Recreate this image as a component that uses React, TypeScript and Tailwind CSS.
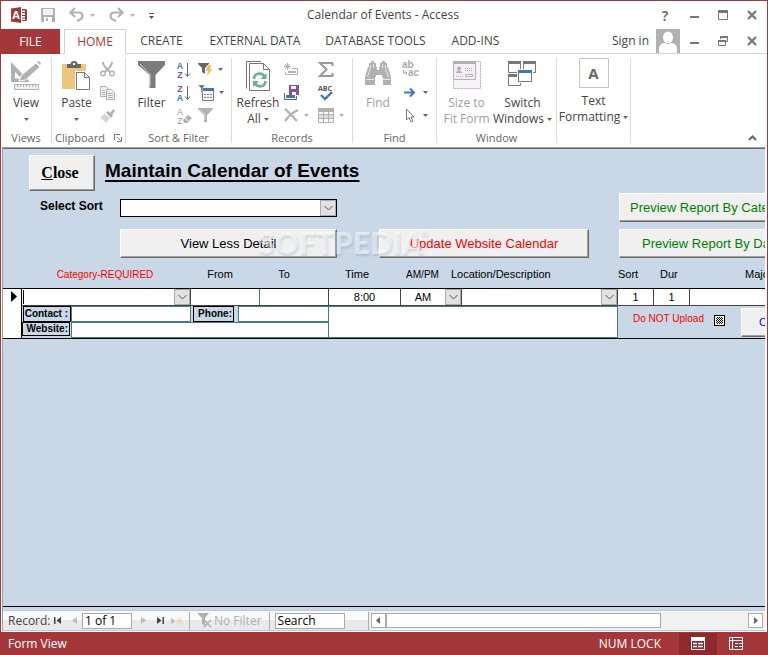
import type { ReactNode } from 'react';
import clsx from 'clsx';

const GRAY = '#777777';
const LIGHT = '#b1b1b1';
const BLUE = '#3f78b5';
const PURPLE = '#8552a1';

interface IconProps {
  w: number;
  h: number;
  className?: string;
  children: ReactNode;
}

function Icon({ w, h, className, children }: IconProps) {
  return (
    <svg
      width={w}
      height={h}
      viewBox={`0 0 ${w} ${h}`}
      fill="none"
      aria-hidden="true"
      className={clsx('shrink-0 overflow-visible', className)}
    >
      {children}
    </svg>
  );
}

function Caret({ muted = false }: { muted?: boolean }) {
  return (
    <Icon w={5} h={3}>
      <path d="M0 0h5L2.5 3z" fill={muted ? LIGHT : '#666'} />
    </Icon>
  );
}

function AccessLogo() {
  return (
    <Icon w={16} h={16}>
      <path d="M0 1.5 10 0v16L0 14.5z" fill="#a4373a" />
      <path
        d="M11 2h3.500q1.500 0 1.500 1.500v9q0 1.500-1.500 1.500H11v-1h3v-1.500h-3v-1h3V9h-3V8h3V6h-3V5h3V3.500h-3z"
        fill="#a4373a"
      />
      <text x="5" y="12" textAnchor="middle" fontSize="11" fontWeight="700" fontFamily="Open Sans" fill="#fff">
        A
      </text>
    </Icon>
  );
}

function SaveIcon() {
  return (
    <Icon w={14} h={14}>
      <path d="M0 0h14v14H1l-1-1z" fill={LIGHT} />
      <path d="M2 1h10v6H2z" fill="#f4eef6" />
      <path d="M3 9h8v5H3z" fill="#fff" />
      <path d="M5 10h2v3H5z" fill={LIGHT} />
    </Icon>
  );
}

function UndoIcon({ flip = false }: { flip?: boolean }) {
  return (
    <Icon w={15} h={14} className={flip ? '-scale-x-100' : ''}>
      <path d="M2 4.500h7.500c5 0 5.500 6 .5 7.500L8 13" stroke={LIGHT} strokeWidth="2.200" />
      <path d="M6 0 1.500 4.500 6 9" stroke={LIGHT} strokeWidth="2.200" />
    </Icon>
  );
}

function ViewIcon() {
  return (
    <Icon w={31} h={30}>
      <path d="M0 1v20h19L0 1zm4 10 6.500 6.500H4z" fill={LIGHT} fillRule="evenodd" />
      <path d="m8 20 2.500-6L25 2l4 4-14.500 13z" fill={LIGHT} stroke="#fff" />
      <path d="m26 1 1.500-1L30 2.500 29 4z" fill={LIGHT} />
      <path d="M3.500 23.500h24v5h-24z" fill="#f4eef6" stroke={LIGHT} />
      <path d="M6.500 24v2m3-2v2m3-2v2m3-2v2m3-2v2m3-2v2m3-2v2" stroke={LIGHT} />
    </Icon>
  );
}

function PasteIcon() {
  return (
    <Icon w={29} h={30}>
      <path d="M0 3h24v25H0z" fill="#ebc67c" />
      <path d="M5 3h3.500c0-1.500 1-3 3.500-3s3.500 1.500 3.500 3H19v4H5z" fill="#666" />
      <path d="M11 2h2v2h-2z" fill="#fff" />
      <path d="M13 10h16v20H13z" fill="#fff" />
      <path d="M14.500 11.500h8l5 5v12h-13z" fill="#fff" stroke={GRAY} />
      <path d="M22.500 11.500v5h5" stroke={GRAY} />
    </Icon>
  );
}

function CutIcon() {
  return (
    <Icon w={15} h={15}>
      <path d="M3 0c0 4 3 6 7 10M12 0c0 4-3 6-7 10" stroke={LIGHT} strokeWidth="2" />
      <circle cx="3" cy="11.500" r="2.300" stroke={LIGHT} strokeWidth="1.400" />
      <circle cx="12" cy="11.500" r="2.300" stroke={LIGHT} strokeWidth="1.400" />
    </Icon>
  );
}

function CopyIcon() {
  return (
    <Icon w={15} h={14}>
      <path d="M.5.5H6l3 3v7H.5z" fill="#f4eef6" stroke={LIGHT} />
      <path d="M2 4.500h3m-3 2h3m-3 2h3" stroke={LIGHT} />
      <path d="M6.500 3.500H11l3.500 3v7h-8z" fill="#f4eef6" stroke={LIGHT} />
      <path d="M8 7.500h5m-5 2h5m-5 2h5" stroke={LIGHT} />
    </Icon>
  );
}

function PainterIcon() {
  return (
    <Icon w={15} h={14}>
      <path d="m0 8 5-3.500L10 9l-4 5z" fill="#d9d4dc" />
      <path d="m6 3.500 2-1.500L13 6.500 11 9z" fill={LIGHT} />
      <path d="m10 4 3.500-4L15 1.500 12 6z" fill={LIGHT} />
    </Icon>
  );
}

function LauncherIcon() {
  return (
    <Icon w={8} h={8}>
      <path d="M.5 6V.5H6M3 3l3.500 3.500M7.500 3v4.500H3" stroke={GRAY} />
    </Icon>
  );
}

function FunnelIcon() {
  return (
    <Icon w={28} h={28}>
      <path d="M0 0h27v4l-9.500 10v13h-6V14L0 4z" fill="#7b7b7b" />
      <path d="m2 3 10 10.500V25" stroke="#d8d8d8" />
    </Icon>
  );
}

function SortIcon({ top, bottom, topColor, bottomColor }: Record<'top' | 'bottom' | 'topColor' | 'bottomColor', string>) {
  return (
    <Icon w={15} h={18}>
      <g fontFamily="Liberation Sans" fontSize="9" fontWeight="700" textAnchor="middle">
        <text x="3" y="8" fill={topColor}>
          {top}
        </text>
        <text x="3" y="17" fill={bottomColor}>
          {bottom}
        </text>
      </g>
      <path d="M10.500 2v13M8 12.500l2.500 3 2.500-3" stroke="#666" />
    </Icon>
  );
}

function ClearSortIcon() {
  return (
    <Icon w={15} h={18}>
      <g fontFamily="Liberation Sans" fontSize="9" textAnchor="middle" fill="#999">
        <text x="3" y="8">
          A
        </text>
        <text x="3" y="17">
          Z
        </text>
      </g>
      <path d="m6 13 5-5 4 3-5 5H7z" fill={LIGHT} />
      <path d="m8 11 3 3" stroke="#fff" />
    </Icon>
  );
}

function SelectionIcon() {
  return (
    <Icon w={15} h={16}>
      <path d="M0 1h11v1L7 6v6L4 10V6L0 2z" fill="#666" />
      <path d="M10 3h4l-2 4h3l-7 8 2-6H7z" fill="#ebb85c" stroke="#fff" strokeWidth=".6" />
    </Icon>
  );
}

function AdvancedIcon() {
  return (
    <Icon w={16} h={16}>
      <path d="M4.500 5.500h11v10h-11z" fill="#fff" stroke={GRAY} />
      <path d="M4 3h12v3H4z" fill={BLUE} />
      <path d="M0 0h7L4.500 3v5L3 7V3z" fill="#666" stroke="#fff" strokeWidth=".4" />
      <path d="M6 9.500h2m1 0h2m1 0h2M6 12.500h2m1 0h2m1 0h2" stroke={GRAY} />
    </Icon>
  );
}

function ToggleFilterIcon() {
  return (
    <Icon w={16} h={15}>
      <path d="M0 0h15v1L9 7v7H6V7L0 1z" fill={LIGHT} />
      <path d="m2 1.500 5 5V12" stroke="#ddd" />
    </Icon>
  );
}

function RefreshIcon() {
  return (
    <Icon w={25} h={31}>
      <path d="M.5 27.500V.5H15" stroke={GRAY} />
      <path d="M3.500 2.500h14l6 6v21h-20z" fill="#fff" stroke={GRAY} />
      <path d="M17.500 2.500v6h6" stroke={GRAY} />
      <path d="M8 18c0-6 8-7 10.500-2.500M19.500 20c0 6-8 7-10.500 2.500" stroke="#6fae94" strokeWidth="2.600" />
      <path d="M20.500 12v6h-6zM7 26v-6h6z" fill="#6fae94" />
    </Icon>
  );
}

function NewRecordIcon() {
  return (
    <Icon w={14} h={13}>
      <path d="M3.500 0v7M0 3.500h7M1 1l5 5m0-5L1 6" stroke={LIGHT} />
      <path d="M8 5.500h5.500v6H1.500v-3" stroke={LIGHT} />
      <path d="M4 8h8v2H4z" fill={LIGHT} />
    </Icon>
  );
}

function SaveRecordIcon() {
  return (
    <Icon w={15} h={15}>
      <path d="M.5 8v6.500h12V11" stroke="#666" />
      <path d="M2 10h9v3H2z" fill={BLUE} />
      <path d="M5 0h10v10H5z" fill={PURPLE} />
      <path d="M7 1h5v3H7zM8 7h4v3H8z" fill="#fff" />
    </Icon>
  );
}

function DeleteIcon() {
  return (
    <Icon w={15} h={13}>
      <path d="M1 0c3 2 7 7 12 12M14 1C9 3 4 8 1 12" stroke={LIGHT} strokeWidth="2.200" />
    </Icon>
  );
}

function SigmaIcon() {
  return (
    <Icon w={16} h={15}>
      <path d="M14.500 4V1H2l6.500 6.500L2 14h12.500v-3" stroke="#999" strokeWidth="2" />
    </Icon>
  );
}

function SpellingIcon() {
  return (
    <Icon w={16} h={17}>
      <text x="7" y="7" textAnchor="middle" fontFamily="Open Sans" fontWeight="700" fontSize="7" fill="#555">
        ABC
      </text>
      <path d="m3 11 4 4 7-7" stroke={BLUE} strokeWidth="2.400" />
    </Icon>
  );
}

function MoreIcon() {
  return (
    <Icon w={16} h={15}>
      <path d="M.5.5h15v14H.5z" fill="#fff" stroke={LIGHT} />
      <path d="M0 0h16v4H0z" fill={LIGHT} />
      <path d="M1 7h14v3H1z" fill="#ddd" />
      <path d="M5.500 4v10m5-10v10M1 6.500h14M1 10.500h14" stroke={LIGHT} />
    </Icon>
  );
}

function BinocularsIcon() {
  return (
    <Icon w={26} h={24}>
      <path
        d="M6 0h3v2h2v4h1v3h2V6h1V2h2V0h3v2h2v4h1l3 10v8h-8v-8h-1v-2h-6v2h-1v8H0v-8L3 6h1V2h2z"
        fill={LIGHT}
      />
      <path d="M5.500 4v3l-3 9m18-12v3l3 9M8.500 3v4M17.500 3v4M1 18.500h8m8 0h8" stroke="#e8e8e8" />
    </Icon>
  );
}

function ReplaceIcon() {
  return (
    <Icon w={17} h={17}>
      <g fontFamily="Liberation Sans" fontSize="10" fontWeight="700" fill="#a9a9a9">
        <text x="0" y="7">
          ab
        </text>
        <text x="6" y="15">
          ac
        </text>
      </g>
      <path d="M1.500 9v3H5M3.500 10.500 5 12l-1.500 1.500" stroke="#a3a3a3" />
    </Icon>
  );
}

function GoToIcon() {
  return (
    <Icon w={13} h={9}>
      <path d="M0 4.500h10M6 .5l4 4-4 4" stroke={BLUE} strokeWidth="2" />
    </Icon>
  );
}

function PointerIcon() {
  return (
    <Icon w={10} h={15}>
      <path d="M1.500 1v11l2.500-2.500 2 4.500 2-1-2-4h3z" fill="#fff" stroke="#777" />
    </Icon>
  );
}

function SizeToFitIcon() {
  return (
    <Icon w={28} h={28}>
      <path d="M.5.5h27v27H.5z" fill="#f7f3f9" stroke={LIGHT} strokeDasharray="2 1" />
      <path d="M.5.5h22v18H.5z" fill="#f4eef6" stroke={LIGHT} />
      <path d="M0 0h23v3H0z" fill={LIGHT} />
      <circle cx="6" cy="7.500" r="2" fill={LIGHT} />
      <path d="M3 12c0-3 6-3 6 0z" fill={LIGHT} />
      <path d="M12 7.500h8M3 15.500h7M12 9.500h8" stroke={LIGHT} strokeDasharray="1 1" />
      <path d="M12.500 13.500h7v2h-7z" fill="#fff" stroke={LIGHT} />
    </Icon>
  );
}

function SwitchWindowsIcon() {
  return (
    <Icon w={29} h={26}>
      <path d="M.5.5h12v11H.5zM15.500.5h12v11h-12zM.5 13.500h12v11H.5z" fill="#fff" stroke={GRAY} />
      <path d="M0 0h13v3H0zM15 0h13v3H15zM0 13h13v3H0z" fill={GRAY} />
      <path d="M9 8h16v14H9z" fill="#fff" />
      <path d="M10.500 9.500h13v11h-13z" fill="#fff" stroke={GRAY} />
      <path d="M10 9h14v3H10z" fill={BLUE} />
    </Icon>
  );
}

function MinimizeIcon() {
  return (
    <Icon w={10} h={10}>
      <path d="M1 6h9v2H1z" fill={GRAY} />
    </Icon>
  );
}

function CloseIcon() {
  return (
    <Icon w={10} h={10}>
      <path d="m1 1 8 8m0-8L1 9" stroke={GRAY} strokeWidth="2.200" />
    </Icon>
  );
}

function MaximizeIcon() {
  return (
    <Icon w={10} h={10}>
      <path d="M.5.5h9v9h-9z" stroke={GRAY} />
      <path d="M0 0h10v3H0z" fill={GRAY} />
    </Icon>
  );
}

function RestoreIcon() {
  return (
    <Icon w={10} h={10}>
      <path d="M2.500 3V.5h7v5H8M.5 4.500h7v5h-7z" stroke={GRAY} />
      <path d="M2 0h8v2H2zM0 4h8v2H0z" fill={GRAY} />
    </Icon>
  );
}

function Avatar() {
  return (
    <Icon w={24} h={24}>
      <path d="M0 0h24v24H0z" fill={LIGHT} />
      <ellipse cx="12" cy="8.500" rx="5" ry="6" fill="#fff" />
      <path d="M3 24v-4c0-4 3-6 6-6 2 1.500 4 1.500 6 0 3 0 6 2 6 6v4z" fill="#fff" />
    </Icon>
  );
}

function IconButton({ label, className, children }: { label: string; className?: string; children: ReactNode }) {
  return (
    <button type="button" aria-label={label} className={clsx('flex shrink-0 items-center justify-center', className)}>
      {children}
    </button>
  );
}

function TitleBar() {
  return (
    <header className="flex h-7 items-center pl-[10px]">
      <AccessLogo />
      <IconButton label="Save" className="ml-[14px]">
        <SaveIcon />
      </IconButton>
      <IconButton label="Undo" className="ml-[14px] gap-[6px]">
        <UndoIcon />
        <Caret muted />
      </IconButton>
      <IconButton label="Redo" className="ml-[14px] gap-[6px]">
        <UndoIcon flip />
        <Caret muted />
      </IconButton>
      <IconButton label="Customize toolbar" className="ml-[14px] pt-[2px]">
        <Icon w={5} h={6}>
          <path d="M0 0h5v1H0zM0 3h5L2.500 6z" fill="#555" />
        </Icon>
      </IconButton>
      <h1 className="flex-1 pr-12 text-center text-[12px] text-[#444]">Calendar of Events - Access</h1>
      <div className="flex items-center gap-[19px] pr-[10px]">
        <IconButton label="Help" className="w-[10px] text-[14px] font-bold text-[#777]">
          ?
        </IconButton>
        <IconButton label="Minimize">
          <MinimizeIcon />
        </IconButton>
        <IconButton label="Maximize">
          <MaximizeIcon />
        </IconButton>
        <IconButton label="Close">
          <CloseIcon />
        </IconButton>
      </div>
    </header>
  );
}

const TABS = [
  { label: 'CREATE', className: 'w-[71px]' },
  { label: 'EXTERNAL DATA', className: 'w-[116px]' },
  { label: 'DATABASE TOOLS', className: 'w-[125px]' },
  { label: 'ADD-INS', className: 'w-[75px]' },
];

function TabStrip() {
  return (
    <nav className="flex h-[25px] text-[12px] text-[#444]">
      <button type="button" className="w-[59px] bg-[#a4373a] text-white">
        FILE
      </button>
      <div className="w-1 border-b border-[#d4d4d4]" />
      <button type="button" className="w-[62px] border border-b-0 border-[#d4d4d4] text-[#a4373a]">
        HOME
      </button>
      <div className="flex flex-1 border-b border-[#d4d4d4]">
        {TABS.map((tab) => (
          <button key={tab.label} type="button" className={clsx('whitespace-nowrap', tab.className)}>
            {tab.label}
          </button>
        ))}
        <div className="ml-auto flex items-center pr-[10px]">
          <a href="#signin" className="mr-[7px] whitespace-nowrap">
            Sign in
          </a>
          <Avatar />
          <div className="ml-[9px] flex gap-[19px]">
            <IconButton label="Minimize form">
              <MinimizeIcon />
            </IconButton>
            <IconButton label="Restore form">
              <RestoreIcon />
            </IconButton>
            <IconButton label="Close form">
              <CloseIcon />
            </IconButton>
          </div>
        </div>
      </div>
    </nav>
  );
}

function Group({ title, className, children, launcher }: { title?: string; className: string; children: ReactNode; launcher?: boolean }) {
  return (
    <section className={clsx('flex shrink-0 flex-col border-r border-[#dcdcdc]', className)}>
      <div className="flex h-[75px] justify-center">{children}</div>
      <div className="flex h-[10px] items-center justify-center gap-[9px] text-[11px] text-[#666]">
        {title}
        {launcher && (
          <IconButton label={`${title} options`}>
            <LauncherIcon />
          </IconButton>
        )}
      </div>
    </section>
  );
}

interface LargeButtonProps {
  icon: ReactNode;
  label: string;
  label2?: string;
  caret?: boolean;
  disabled?: boolean;
  className?: string;
}

function LargeButton({ icon, label, label2, caret, disabled, className }: LargeButtonProps) {
  return (
    <button
      type="button"
      disabled={disabled}
      className={clsx(
        'flex flex-col items-center whitespace-nowrap text-[12px] leading-4',
        disabled ? 'text-[#a0a0a0]' : 'text-[#444]',
        className
      )}
    >
      <span className="flex h-[37px] items-start justify-center pt-[3px]">{icon}</span>
      <span>{label}</span>
      <span className="flex h-4 items-center gap-[3px]">
        {label2}
        {caret && <Caret />}
      </span>
    </button>
  );
}

function SmallButton({ label, caret, muted, children }: { label: string; caret?: boolean; muted?: boolean; children: ReactNode }) {
  return (
    <IconButton label={label} className="h-[23px] gap-[5px]">
      {children}
      {caret && <Caret muted={muted} />}
    </IconButton>
  );
}

function Ribbon() {
  return (
    <div className="flex h-[93px] pt-1 pb-1">
      <Group title="Views" className="w-[51px]">
        <LargeButton icon={<ViewIcon />} label="View" caret />
      </Group>
      <Group title="Clipboard" className="w-[74px]" launcher>
        <LargeButton icon={<PasteIcon />} label="Paste" caret className="w-[40px] pr-[3px]" />
        <div className="mr-1 ml-[2px] flex flex-col">
          <SmallButton label="Cut">
            <CutIcon />
          </SmallButton>
          <SmallButton label="Copy">
            <CopyIcon />
          </SmallButton>
          <SmallButton label="Format Painter">
            <PainterIcon />
          </SmallButton>
        </div>
      </Group>
      <Group title="Sort & Filter" className="w-[106px]">
        <LargeButton icon={<FunnelIcon />} label="Filter" className="w-[40px]" />
        <div className="ml-[5px] flex flex-col">
          <SmallButton label="Ascending">
            <SortIcon top="A" bottom="Z" topColor={BLUE} bottomColor={PURPLE} />
          </SmallButton>
          <SmallButton label="Descending">
            <SortIcon top="Z" bottom="A" topColor={PURPLE} bottomColor={BLUE} />
          </SmallButton>
          <SmallButton label="Remove Sort">
            <ClearSortIcon />
          </SmallButton>
        </div>
        <div className="mr-[2px] ml-[6px] flex flex-col items-start">
          <SmallButton label="Selection" caret>
            <SelectionIcon />
          </SmallButton>
          <SmallButton label="Advanced" caret>
            <AdvancedIcon />
          </SmallButton>
          <SmallButton label="Toggle Filter">
            <ToggleFilterIcon />
          </SmallButton>
        </div>
      </Group>
      <Group title="Records" className="w-[121px]">
        <LargeButton icon={<RefreshIcon />} label="Refresh" label2="All" caret className="w-[44px]" />
        <div className="ml-1 flex w-[34px] flex-col items-start">
          <SmallButton label="New">
            <NewRecordIcon />
          </SmallButton>
          <SmallButton label="Save Record">
            <SaveRecordIcon />
          </SmallButton>
          <SmallButton label="Delete" caret muted>
            <DeleteIcon />
          </SmallButton>
        </div>
        <div className="mr-1 flex flex-col items-start">
          <SmallButton label="Totals">
            <SigmaIcon />
          </SmallButton>
          <SmallButton label="Spelling">
            <SpellingIcon />
          </SmallButton>
          <SmallButton label="More" caret muted>
            <MoreIcon />
          </SmallButton>
        </div>
      </Group>
      <Group title="Find" className="w-[84px]">
        <LargeButton icon={<BinocularsIcon />} label="Find" disabled className="w-[40px]" />
        <div className="mr-[3px] ml-1 flex flex-col items-start">
          <SmallButton label="Replace">
            <ReplaceIcon />
          </SmallButton>
          <SmallButton label="Go To" caret>
            <span className="flex w-4 justify-center">
              <GoToIcon />
            </span>
          </SmallButton>
          <SmallButton label="Select" caret>
            <span className="flex w-4 justify-center">
              <PointerIcon />
            </span>
          </SmallButton>
        </div>
      </Group>
      <Group title="Window" className="w-[120px]">
        <LargeButton icon={<SizeToFitIcon />} label="Size to" label2="Fit Form" disabled className="w-[52px]" />
        <LargeButton icon={<SwitchWindowsIcon />} label="Switch" label2="Windows" caret className="w-[60px]" />
      </Group>
      <Group className="w-[74px]">
        <button type="button" className="flex flex-col items-center text-[12px] leading-4 whitespace-nowrap text-[#444]">
          <span className="mb-[5px] flex h-[30px] w-[30px] items-center justify-center border border-[#c6c6c6] text-[15px] font-bold text-[#666]">
            A
          </span>
          <span>Text</span>
          <span className="flex items-center gap-[3px]">
            Formatting <Caret />
          </span>
        </button>
      </Group>
      <IconButton label="Collapse the Ribbon" className="mt-auto mr-[10px] mb-[2px] ml-auto">
        <Icon w={9} h={6}>
          <path d="m1 5 3.500-3.500L8 5" stroke="#666" strokeWidth="2" />
        </Icon>
      </IconButton>
    </div>
  );
}

function FormButton({ className, children }: { className?: string; children: ReactNode }) {
  return (
    <button
      type="button"
      className={clsx(
        'shrink-0 overflow-hidden border border-t-white border-r-[#696969] border-b-[#696969] border-l-white bg-[#f0f0f0] whitespace-nowrap shadow-[inset_-1px_-1px_0_#a0a0a0]',
        className
      )}
    >
      {children}
    </button>
  );
}

interface DropDownProps {
  id: string;
  label: string;
  value?: string;
  cursor?: boolean;
  className?: string;
}

function DropDown({ id, label, value, cursor, className }: DropDownProps) {
  return (
    <div className={clsx('relative flex shrink-0 bg-white', className)}>
      <select
        id={id}
        aria-label={label}
        defaultValue={value}
        className="min-w-0 flex-1 appearance-none bg-transparent pr-4 text-center text-[11px] leading-4 outline-none"
      >
        <option>{value}</option>
      </select>
      {cursor && <span className="pointer-events-none absolute inset-y-px left-px w-px bg-black" />}
      <span className="pointer-events-none absolute inset-y-0 right-0 flex w-4 items-center justify-center border border-[#ababab] bg-[#e1e1e1]">
        <Icon w={9} h={6}>
          <path d="m.5 1 4 4 4-4" stroke="#555" />
        </Icon>
      </span>
    </div>
  );
}

function FormHeader() {
  return (
    <div className="flex shrink-0 flex-col overflow-hidden pt-[6px]">
      <div className="flex h-[37px] pl-[26px]">
        <FormButton className="h-[36px] w-[66px] pr-1 font-['Liberation_Serif',serif] text-[16px] font-bold">
          <span className="underline">C</span>lose
        </FormButton>
        <h2 className="ml-[10px] text-[19px] leading-8 font-bold whitespace-nowrap underline decoration-2 underline-offset-[3px]">
          Maintain Calendar of Events
        </h2>
      </div>
      <div className="mt-px flex h-[29px]">
        <label htmlFor="sort" className="w-[117px] shrink-0 pl-[37px] text-[12px] leading-[26px] font-bold">
          Select Sort
        </label>
        <DropDown id="sort" label="Select Sort" className="mt-[6px] h-[18px] w-[217px] border border-black" />
        <FormButton className="ml-[282px] h-[29px] w-[168px] px-[10px] text-left text-[13px] text-[#008000]">
          Preview Report By Category
        </FormButton>
      </div>
      <div className="mt-[7px] flex h-[29px] pl-[117px]">
        <FormButton className="w-[217px] text-[13px]">View Less Detail</FormButton>
        <FormButton className="ml-[42px] w-[210px] text-[13px] text-[#ff0000]">Update Website Calendar</FormButton>
        <FormButton className="ml-[30px] w-[168px] pl-[22px] text-left text-[13px] text-[#008000]">
          Preview Report By Date
        </FormButton>
      </div>
      <div className="flex h-[30px] pl-[19px] text-center text-[11px] leading-[33px] whitespace-nowrap">
        <span className="w-[166px] shrink-0 text-[10px] text-[#ff0000]">Category-REQUIRED</span>
        <span className="w-[64px] shrink-0">From</span>
        <span className="w-[64px] shrink-0">To</span>
        <span className="w-[82px] shrink-0">Time</span>
        <span className="w-[49px] shrink-0 text-[10px]">AM/PM</span>
        <span className="w-[171px] shrink-0 pl-1 text-left">Location/Description</span>
        <span className="w-[42px] shrink-0 text-left">Sort</span>
        <span className="w-[85px] shrink-0 text-left">Dur</span>
        <span className="shrink-0">Major</span>
      </div>
    </div>
  );
}

const FIELD = 'min-w-0 bg-white px-px text-[11px] leading-[14px] outline-none';
const TAG = 'flex shrink-0 items-center justify-end border border-black text-[10px] leading-3 font-bold whitespace-nowrap';

function EventRecord() {
  return (
    <div className="flex shrink-0 overflow-hidden border-y border-black">
      <div className="flex w-[18px] shrink-0 justify-center bg-white pt-[2px] pl-1">
        <Icon w={6} h={11}>
          <path d="M0 0v11l6-5.500z" fill="#000" />
        </Icon>
      </div>
      <div className="flex min-w-0 flex-1 flex-col border-l border-black">
        <div className="flex h-[17px] border-b border-[#444]">
          <DropDown id="category" label="Category" cursor className="w-[169px] border-r border-[#444]" />
          <input aria-label="From" className={clsx(FIELD, 'w-[69px] border-r border-[#408080]')} />
          <input aria-label="To" className={clsx(FIELD, 'w-[69px] border-r border-[#444]')} />
          <input aria-label="Time" defaultValue="8:00" className={clsx(FIELD, 'w-[72px] border-r border-[#444] text-center')} />
          <DropDown id="ampm" label="AM/PM" value="AM" className="w-[61px] border-r border-[#444]" />
          <DropDown id="location" label="Location" className="w-[156px] border-r border-[#444]" />
          <input aria-label="Sort" defaultValue="1" className={clsx(FIELD, 'w-[36px] border-r border-[#444] text-center')} />
          <input aria-label="Duration" defaultValue="1" className={clsx(FIELD, 'w-[36px] border-r border-[#444] text-center')} />
          <input aria-label="Major" className={clsx(FIELD, 'w-0 flex-1')} />
        </div>
        <div className="flex h-[32px]">
          <div className="flex w-[307px] shrink-0 flex-col border-r border-[#408080]">
            <div className="flex h-4">
              <label htmlFor="contact" className={clsx(TAG, 'ml-px w-[48px] pr-[2px]')}>
                Contact :
              </label>
              <input id="contact" className={clsx(FIELD, 'w-[120px] border border-[#408080]')} />
              <label htmlFor="phone" className={clsx(TAG, 'ml-[2px] w-[41px] pr-px')}>
                Phone:
              </label>
              <input id="phone" className={clsx(FIELD, 'ml-1 flex-1 border border-r-0 border-[#408080]')} />
            </div>
            <div className="flex h-4">
              <label htmlFor="website" className={clsx(TAG, 'h-[14px] w-[48px] pr-px')}>
                Website:
              </label>
              <input id="website" className={clsx(FIELD, 'ml-px flex-1 border border-r-0 border-[#408080]')} />
            </div>
          </div>
          <textarea
            aria-label="Description"
            className="w-[289px] shrink-0 resize-none border-y border-r border-[#408080] bg-white outline-none"
          />
          <div className="flex shrink-0 items-start pt-[6px] pl-[15px] text-[10px] leading-[14px] text-[#ff0000]">
            <label htmlFor="noupload" className="w-[81px] whitespace-nowrap">
              Do NOT Upload
            </label>
            <input
              id="noupload"
              type="checkbox"
              className="mt-[3px] h-[11px] w-[11px] appearance-none border border-black bg-[repeating-conic-gradient(#000_0_25%,#fff_0_50%)] bg-[length:2px_2px] shadow-[inset_0_0_0_1px_white]"
            />
          </div>
          <FormButton className="mt-[2px] ml-[16px] h-[29px] w-[80px] pl-[17px] text-left text-[11px] text-[#0000ff]">Copy</FormButton>
        </div>
      </div>
    </div>
  );
}

function Watermark() {
  return (
    <div
      aria-hidden="true"
      className="pointer-events-none absolute top-[75px] left-[255px] flex items-start font-['Lato',sans-serif] text-[30px] leading-[36px] font-black text-white/50 [text-shadow:1px_2px_2px_rgb(90_110_140_/_0.2)]"
    >
      SOFTPEDIA
      <span className="-ml-[3px] text-[10px] leading-[16px]">®</span>
    </div>
  );
}

function NavSeparator({ className }: { className?: string }) {
  return <div className={clsx('h-[18px] w-px shrink-0 bg-[#ababab]', className)} />;
}

function NavBar() {
  return (
    <div className="flex h-[21px] shrink-0 items-center border-t border-b border-[#c8c8c8] bg-linear-to-b from-[#f8f9fa] from-50% to-[#e7e9ec] to-50% pl-[5px] text-[12px] text-[#444]">
      <label htmlFor="record" className="w-[46px] shrink-0">
        Record:
      </label>
      <IconButton label="First record">
        <Icon w={7} h={7}>
          <path d="M0 0h1.500v7H0zM7 0v7L2.500 3.500z" fill="#444" />
        </Icon>
      </IconButton>
      <IconButton label="Previous record" className="ml-[11px]">
        <Icon w={5} h={7}>
          <path d="M5 0v7L0 3.500z" fill="#bbb" />
        </Icon>
      </IconButton>
      <input
        id="record"
        defaultValue="1 of 1"
        className="ml-[5px] h-4 w-[50px] border border-[#ababab] bg-white px-[2px] leading-4 text-black outline-none"
      />
      <IconButton label="Next record" className="ml-[9px]">
        <Icon w={5} h={7}>
          <path d="M0 0v7l5-3.500z" fill="#bbb" />
        </Icon>
      </IconButton>
      <IconButton label="Last record" className="ml-[11px]">
        <Icon w={7} h={7}>
          <path d="M5.500 0H7v7H5.500zM0 0v7l4.500-3.500z" fill="#444" />
        </Icon>
      </IconButton>
      <IconButton label="New record" className="ml-[7px]">
        <Icon w={13} h={8}>
          <path d="M0 .5v7L4.500 4z" fill="#c4c4c4" />
          <path d="M8.500 0v8M5 4h7M6 1.500l5 5m0-5-5 5" stroke="#eed9a0" />
        </Icon>
      </IconButton>
      <NavSeparator className="ml-[5px]" />
      <button type="button" disabled className="ml-[7px] flex shrink-0 items-center gap-[2px] text-[#b1b1b1]">
        <Icon w={15} h={15}>
          <path d="M0 0h12L8 5v8L5 11V5z" fill={LIGHT} />
          <path d="m7 7 7 7m0-7-7 7" stroke={LIGHT} strokeWidth="1.500" />
        </Icon>
        No Filter
      </button>
      <NavSeparator className="ml-[7px]" />
      <input
        aria-label="Search records"
        defaultValue="Search"
        className="ml-[5px] h-4 w-[70px] shrink-0 border border-[#ababab] bg-white px-[2px] leading-4 text-black outline-none"
      />
      <div className="ml-[23px] flex h-[18px] flex-1 items-center border-l border-[#ababab] bg-[#f1f1f1] pr-[2px] pl-[2px]">
        <IconButton label="Scroll left" className="h-[15px] w-[15px] border border-[#ababab] bg-white">
          <Icon w={4} h={7}>
            <path d="M4 0v7L0 3.500z" fill="#666" />
          </Icon>
        </IconButton>
        <div className="flex flex-1">
          <div className="h-[15px] w-[76%] border border-[#ababab] bg-white" />
        </div>
        <IconButton label="Scroll right" className="h-[15px] w-[15px] border border-[#ababab] bg-white">
          <Icon w={4} h={7}>
            <path d="M0 0v7l4-3.500z" fill="#666" />
          </Icon>
        </IconButton>
      </div>
    </div>
  );
}

function StatusBar() {
  return (
    <footer className="flex h-[23px] shrink-0 items-center bg-[#a4373a] pl-[8px] text-[12px] text-white">
      <span>Form View</span>
      <span className="ml-auto">NUM LOCK</span>
      <IconButton label="Form View" className="ml-[18px] h-[22px] w-[38px] bg-[#8e2a2e]">
        <Icon w={14} h={13}>
          <path d="M.5.500h13v12H.5z" stroke="#fff" />
          <path d="M0 0h14v4H0z" fill="#fff" />
          <path d="M2 6.500h4m1 0h5m-10 3h4m1 0h5" stroke="#fff" strokeWidth="1.500" />
        </Icon>
      </IconButton>
      <IconButton label="Layout View" className="h-[22px] w-[38px]">
        <Icon w={14} h={13}>
          <path d="M.5.500h13v12H.5zM.5 3.500h13M3.500.500v12" stroke="#fff" />
          <path d="M6 6.500h3m1 0h3m-7 3h3m1 0h3" stroke="#fff" />
        </Icon>
      </IconButton>
      <div className="w-[13px]" />
    </footer>
  );
}

export default function App() {
  return (
    <div className="flex min-h-screen flex-col overflow-hidden bg-white font-['Open_Sans','Noto_Sans',sans-serif]">
      <div className="flex flex-1 flex-col border border-b-0 border-[#a4373a]">
        <TitleBar />
        <TabStrip />
        <Ribbon />
        <div className="mr-[2px] mb-px ml-px flex flex-1 flex-col border-t border-l border-[#a0a0a0]">
          <main className="relative flex flex-1 flex-col overflow-hidden border-t border-[#696969] bg-[#c9d7e6] font-['Liberation_Sans',sans-serif] text-black">
            <FormHeader />
            <EventRecord />
            <div className="flex-1 border-b border-black" />
            <div className="h-[3px]" />
            <Watermark />
          </main>
          <NavBar />
        </div>
      </div>
      <StatusBar />
    </div>
  );
}
